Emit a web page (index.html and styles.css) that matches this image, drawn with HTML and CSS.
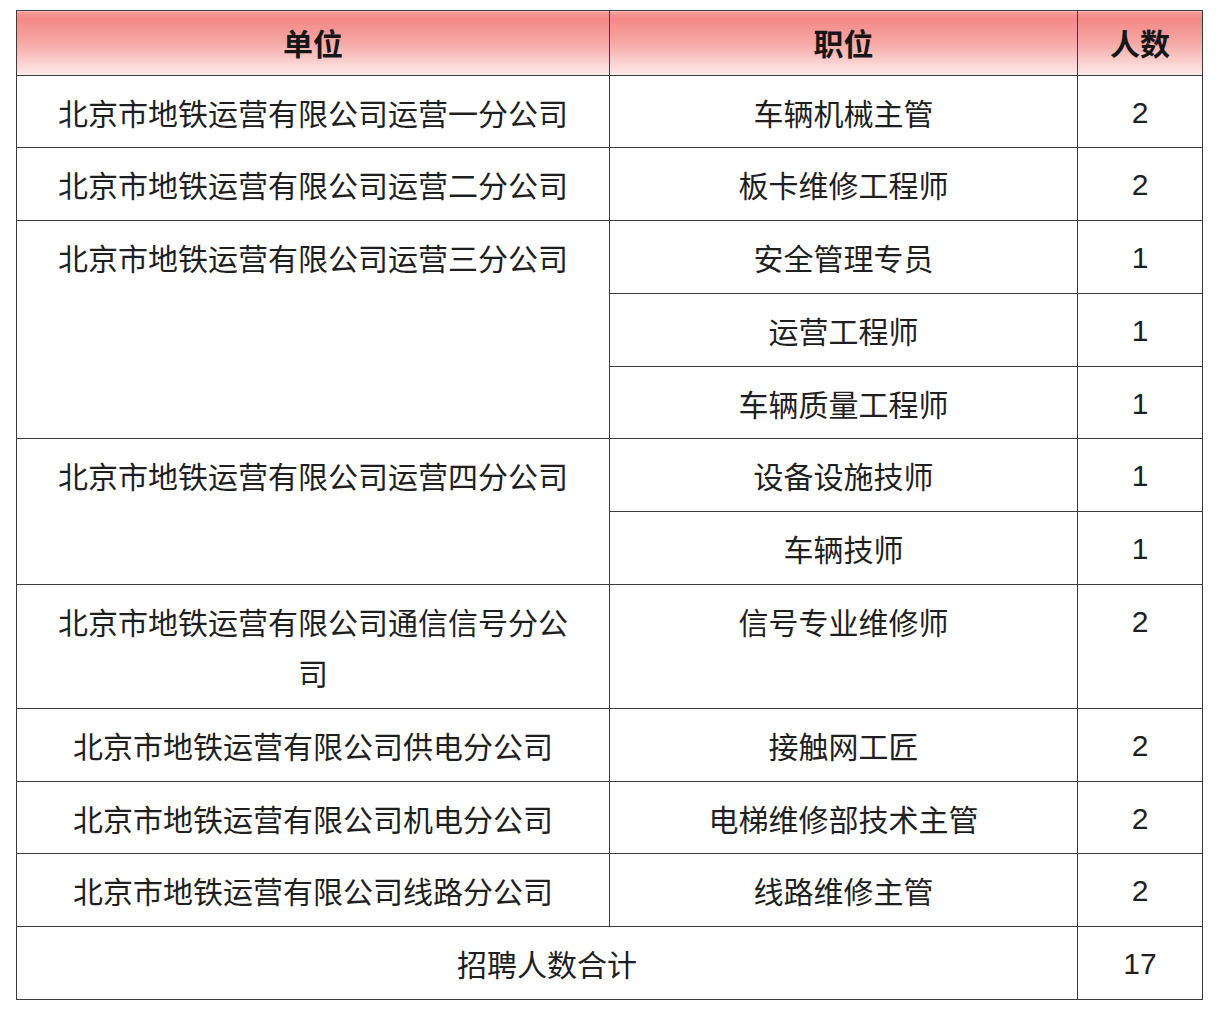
FILE: index.html
```html
<!DOCTYPE html>
<html lang="zh-CN">
<head>
<meta charset="utf-8">
<title>招聘岗位</title>
<link rel="stylesheet" href="styles.css">
</head>
<body>
<div class="page">
<table class="jobs">
  <colgroup>
    <col class="c-unit">
    <col class="c-post">
    <col class="c-num">
  </colgroup>
  <thead>
    <tr><th>单位</th><th>职位</th><th>人数</th></tr>
  </thead>
  <tbody>
    <tr><td class="unit">北京市地铁运营有限公司运营一分公司</td><td>车辆机械主管</td><td class="num">2</td></tr>
    <tr><td class="unit">北京市地铁运营有限公司运营二分公司</td><td>板卡维修工程师</td><td class="num">2</td></tr>
    <tr><td class="unit" rowspan="3">北京市地铁运营有限公司运营三分公司</td><td>安全管理专员</td><td class="num">1</td></tr>
    <tr><td>运营工程师</td><td class="num">1</td></tr>
    <tr><td>车辆质量工程师</td><td class="num">1</td></tr>
    <tr><td class="unit" rowspan="2">北京市地铁运营有限公司运营四分公司</td><td>设备设施技师</td><td class="num">1</td></tr>
    <tr><td>车辆技师</td><td class="num">1</td></tr>
    <tr><td class="unit">北京市地铁运营有限公司通信信号分公司</td><td>信号专业维修师</td><td class="num">2</td></tr>
    <tr><td class="unit">北京市地铁运营有限公司供电分公司</td><td>接触网工匠</td><td class="num">2</td></tr>
    <tr><td class="unit">北京市地铁运营有限公司机电分公司</td><td>电梯维修部技术主管</td><td class="num">2</td></tr>
    <tr><td class="unit">北京市地铁运营有限公司线路分公司</td><td>线路维修主管</td><td class="num">2</td></tr>
    <tr><td colspan="2">招聘人数合计</td><td class="num">17</td></tr>
  </tbody>
</table>
</div>
</body>
</html>
```

FILE: styles.css
```css
html, body {
  margin: 0;
  padding: 0;
  background: #ffffff;
}

.page {
  padding: 10px 16px;
}

.jobs {
  border-collapse: collapse;
  width: 1186px;
  table-layout: fixed;
  font-family: "Noto Sans CJK SC", "Microsoft YaHei", sans-serif;
  font-size: 30px;
  color: #1f1f1f;
}

.c-unit { width: 593px; }
.c-post { width: 468px; }
.c-num { width: 125px; }

.jobs th,
.jobs td {
  border: 1px solid #3c3c3c;
  text-align: center;
  vertical-align: top;
  line-height: 51.7px;
}

.jobs th {
  padding: 6px 10px 6px;
  font-weight: 700;
  color: #161616;
  background: linear-gradient(to bottom, #f49a97 0%, #f48987 12%, #f6a9a7 50%, #fbd8d7 85%, #fde9e9 100%);
}

.jobs td {
  padding: 11px 10px 9px;
}

.jobs td.unit {
  padding-left: 30px;
  padding-right: 30px;
}

.jobs td.num {
  font-family: "Liberation Sans", Arial, sans-serif;
}
```
